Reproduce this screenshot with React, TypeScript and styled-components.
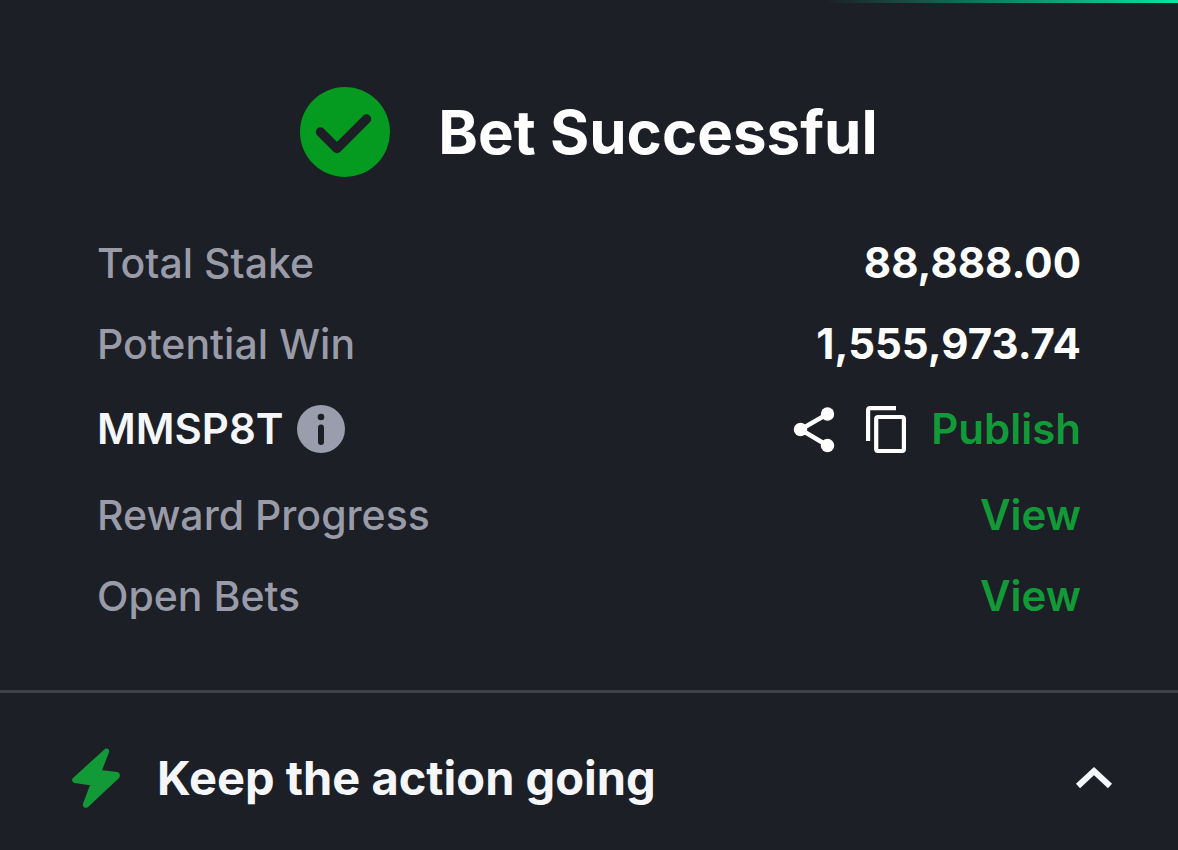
import React from "react";
import styled, { createGlobalStyle } from "styled-components";

const Global = createGlobalStyle`
  * { box-sizing: border-box; }
  body { margin: 0; background: #1c1f26; font-family: Inter, "Liberation Sans", sans-serif; color: #f5f6f9; }
`;
const Page = styled.main`
  min-height: 100vh;
  background: #1c1f26;
`;
const Progress = styled.div`
  height: 3px;
  background: linear-gradient(to right, transparent 70%, #05e6a4);
`;
const Header = styled.header`
  display: flex;
  align-items: center;
  justify-content: center;
  gap: 48px;
  padding: 84px 0 45px;
`;
const Title = styled.h1`
  margin: 0;
  color: #fff;
  font-size: 60px;
  line-height: 90px;
  font-weight: 700;
`;
const List = styled.div`
  padding: 0 97px 54px;
`;
const Row = styled.div<{ $tall?: boolean }>`
  display: flex;
  align-items: center;
  justify-content: space-between;
  min-height: ${(p) => (p.$tall ? 90 : 81)}px;
  font-size: 42px;
  line-height: 52px;
`;
const Label = styled.span`
  color: #9a9ba8;
  font-size: 41px;
  font-weight: 500;
`;
const Code = styled.span`
  font-weight: 600;
`;
const Value = styled.span`
  color: #fff;
  font-weight: 700;
`;
const Group = styled.div<{ $gap: number }>`
  display: flex;
  align-items: center;
  gap: ${(p) => p.$gap}px;
`;
const IconButton = styled.button`
  display: flex;
  padding: 0;
  border: 0;
  background: none;
  color: #fff;
  cursor: pointer;
`;
const Action = styled.a`
  color: #129a38;
  font-weight: 600;
  text-decoration: none;
`;
const Toggle = styled.button`
  display: flex;
  align-items: center;
  width: 100%;
  padding: 53px 64px 39px 70px;
  border: 0;
  border-top: 3px solid #3e404c;
  background: none;
  color: inherit;
  font: 700 47px/64px Inter, "Liberation Sans", sans-serif;
  text-align: left;
  cursor: pointer;
`;
const ToggleText = styled.span`
  flex: 1;
  margin-left: 35px;
`;

export default function App() {
  return (
    <Page>
      <Global />
      <Progress />
      <Header>
        <svg width="90" height="90" viewBox="0 0 90 90" aria-hidden="true">
          <circle cx="45" cy="45" r="45" fill="#049b20" />
          <path d="M20.5 45 37 61.500 66.500 32" fill="none" stroke="#1c1f26" strokeWidth="9.5" strokeLinecap="round" strokeLinejoin="round" />
        </svg>
        <Title>Bet Successful</Title>
      </Header>
      <List>
        <Row><Label>Total Stake</Label><Value>88,888.00</Value></Row>
        <Row><Label>Potential Win</Label><Value>1,555,973.74</Value></Row>
        <Row $tall>
          <Group $gap={13}>
            <Code>MMSP8T</Code>
            <IconButton aria-label="Booking code information">
              <svg width="48" height="48" viewBox="0 0 48 48">
                <circle cx="24" cy="24" r="24" fill="#9a9dab" />
                <circle cx="24" cy="12" r="3.3" fill="#1c1f26" />
                <path d="M24 22.500V37" fill="none" stroke="#1c1f26" strokeWidth="6" strokeLinecap="round" />
              </svg>
            </IconButton>
          </Group>
          <Group $gap={25}>
            <IconButton aria-label="Share">
              <svg width="48" height="48" viewBox="0 0 48 48" fill="currentColor">
                <path d="M34.500 9 7.500 24.500 34.500 40.500" fill="none" stroke="currentColor" strokeWidth="4.500" />
                <circle cx="34.500" cy="9" r="6.700" /><circle cx="7.500" cy="24.500" r="6.700" /><circle cx="34.500" cy="40.500" r="6.700" />
              </svg>
            </IconButton>
            <IconButton aria-label="Copy">
              <svg width="40" height="48" viewBox="0 0 40 48" fill="none" stroke="currentColor" strokeWidth="4.2">
                <path d="M2.100 36V5Q2.100 3.100 4 3.100H30" /><rect x="10.200" y="12" width="27.700" height="34" rx="2" />
              </svg>
            </IconButton>
            <Action href="#publish">Publish</Action>
          </Group>
        </Row>
        <Row><Label>Reward Progress</Label><Action href="#rewards">View</Action></Row>
        <Row><Label>Open Bets</Label><Action href="#bets">View</Action></Row>
      </List>
      <Toggle aria-expanded="true">
        <svg width="52" height="60" viewBox="0 0 52 60" aria-hidden="true">
          <path d="M36 2 4 31Q3 33 5 33.500L22 36 14.500 56Q14 59 17 58L48 29Q49 26 47 25.500L30 23.500 37.500 4Q38 1.500 36 2Z" fill="#129a38" stroke="#129a38" strokeWidth="3" strokeLinejoin="round" />
        </svg>
        <ToggleText>Keep the action going</ToggleText>
        <svg width="40" height="24" viewBox="0 0 40 24" aria-hidden="true"><path d="M4 20 20 5 36 20" fill="none" stroke="currentColor" strokeWidth="6" /></svg>
      </Toggle>
    </Page>
  );
}
